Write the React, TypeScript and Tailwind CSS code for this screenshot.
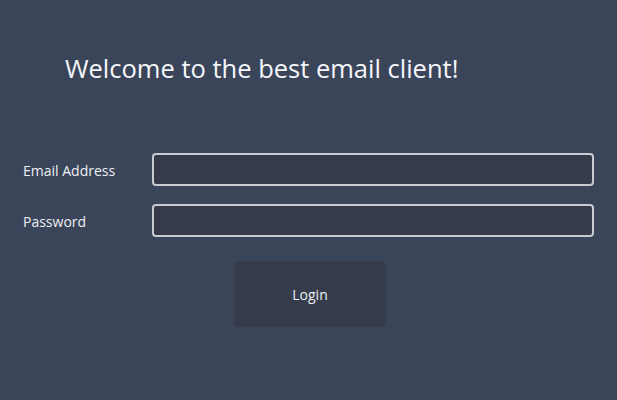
export default function App() {
  return (
    <div
      className="w-[617px] h-[400px] bg-[#3b4559] text-white overflow-hidden"
      style={{ fontFamily: '"Open Sans", "Noto Sans", sans-serif' }}
    >
      <h1 className="pl-[65px] pt-[50px] text-[25.5px] leading-[36px] font-normal text-[#f4f6fa]">
        Welcome to the best email client!
      </h1>

      <div className="mt-[67px] pl-[23px] pr-[23px] grid grid-cols-[129px_1fr] gap-y-[18px] items-center">
        <label className="pt-[2px] text-[14px] text-[#eef0f4]">Email Address</label>
        <input
          type="text"
          className="h-[33px] rounded-[4px] border-2 border-[#c9cbd0] bg-[#353b4b] outline-none"
        />
        <label className="pt-[2px] text-[14px] text-[#eef0f4]">Password</label>
        <input
          type="password"
          className="h-[33px] rounded-[4px] border-2 border-[#c9cbd0] bg-[#353b4b] outline-none"
        />
      </div>

      <div className="pl-[234px] mt-[24px]">
        <button className="w-[152px] h-[66px] rounded-[4px] bg-[#363c4c] text-[14px] text-[#eef0f4]">
          Login
        </button>
      </div>
    </div>
  );
}
